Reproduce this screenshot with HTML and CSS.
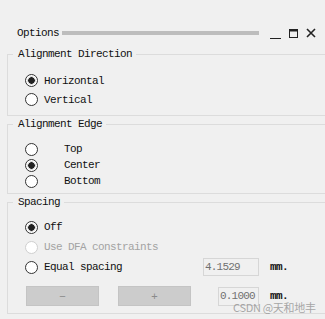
FILE: index.html
```html
<!DOCTYPE html>
<html lang="en">
<head>
  <meta charset="UTF-8">
  <meta name="viewport" content="width=device-width, initial-scale=1">
  <title>Options</title>
  <link rel="stylesheet" href="styles.css">
</head>
<body>

  <div class="panel">
    <div class="titlebar">
      <span class="title">Options</span>
      <span class="grip"></span>
      <span class="controls">
        <svg width="11" height="12" viewBox="0 0 11 12"><rect x="0" y="11" width="11" height="1.5" fill="#222"/></svg>
        <svg width="9" height="9" viewBox="0 0 9 9"><rect x="0.5" y="0.5" width="8" height="8" fill="none" stroke="#222"/><rect x="0" y="0" width="9" height="2.5" fill="#222"/></svg>
        <svg width="10" height="10" viewBox="0 0 10 10"><path d="M1 1 L9 9 M9 1 L1 9" stroke="#222" stroke-width="1.6"/></svg>
      </span>
    </div>

    <fieldset class="group group-direction">
      <legend>Alignment Direction</legend>
      <label class="row"><input type="radio" name="dir" checked><span>Horizontal</span></label>
      <label class="row"><input type="radio" name="dir"><span>Vertical</span></label>
    </fieldset>

    <fieldset class="group group-edge">
      <legend>Alignment Edge</legend>
      <label class="row"><input type="radio" name="edge"><span>Top</span></label>
      <label class="row"><input type="radio" name="edge" checked><span>Center</span></label>
      <label class="row"><input type="radio" name="edge"><span>Bottom</span></label>
    </fieldset>

    <fieldset class="group group-spacing">
      <legend>Spacing</legend>
      <label class="row"><input type="radio" name="sp" checked><span>Off</span></label>
      <label class="row disabled"><input type="radio" name="sp" disabled><span>Use DFA constraints</span></label>
      <div class="row spin-row">
        <label class="spin-label"><input type="radio" name="sp"><span>Equal spacing</span></label>
        <input class="field field-wide" type="text" value="4.1529" disabled>
        <span class="unit">mm.</span>
      </div>
      <div class="button-row">
        <button class="step" disabled>&minus;</button>
        <button class="step" disabled>+</button>
        <input class="field field-small" type="text" value="0.1000" disabled>
        <span class="unit">mm.</span>
      </div>
    </fieldset>

    <div class="watermark">CSDN @天和地丰</div>
  </div>

</body>
</html>
```

FILE: styles.css
```css
body {
  margin: 0;
  background-color: #f0f0f0;
  font-family: "Liberation Mono", "DejaVu Sans Mono", monospace;
  font-size: 11px;
  letter-spacing: -0.6px;
  color: #111;
  overflow: hidden;
}

.panel {
  position: relative;
  height: 319px;
  padding-top: 25px;
  box-sizing: border-box;
  overflow: hidden;
}

.titlebar {
  display: flex;
  align-items: center;
  height: 16px;
  padding-left: 17px;
  padding-right: 9px;
}

.grip {
  flex: 1;
  height: 4px;
  background-color: #bdbdbd;
  margin: 0 11px 0 3px;
}

.controls {
  display: flex;
  align-items: center;
  gap: 8px;
}

.controls svg {
  display: block;
}

/* group boxes run off the right edge of the dock */
.group {
  margin: 6px -30px 0 7px;
  padding: 0 0 0 5px;
  border: 1px solid #dcdcdc;
}

.group legend {
  padding: 0 4px 0 5px;
  line-height: 14px;
}

.group-direction {
  padding-top: 10px;
  padding-bottom: 6px;
}

.group-direction .row {
  height: 19px;
}

.group-edge {
  margin-top: 1px;
  padding-top: 10px;
  padding-bottom: 4px;
}

.group-edge .row {
  height: 16px;
}

.group-edge .row span {
  margin-left: 20px;
}

.group-spacing {
  margin-top: 1px;
  padding-top: 8px;
  padding-bottom: 7px;
}

.group-spacing .row {
  height: 20px;
}

.row,
.spin-label {
  display: flex;
  align-items: center;
  margin-left: 12px;
}

.spin-label {
  margin-left: 0;
  width: 178px;
}

input[type="radio"] {
  appearance: none;
  -webkit-appearance: none;
  width: 13px;
  height: 13px;
  margin: 0 6px 0 0;
  border: 1px solid #333;
  border-radius: 50%;
  background-color: #fff;
  box-sizing: border-box;
}

input[type="radio"]:checked {
  background: radial-gradient(circle, #222 0 3px, #d8d8d8 3.5px 4px, #fff 4.5px);
}

input[type="radio"]:disabled {
  border-color: #cfcfcf;
}

.disabled {
  color: #a3a3a3;
}

.field {
  height: 18px;
  padding: 0 1px;
  border: 1px solid #d6d6d6;
  background-color: #f0f0f0;
  color: #707070;
  font-family: inherit;
  font-size: 11px;
  letter-spacing: -0.8px;
  box-sizing: border-box;
}

.field-wide {
  width: 56px;
}

.field-small {
  width: 41px;
  height: 19px;
}

.unit {
  margin-left: 11px;
  font-weight: bold;
}

.button-row {
  display: flex;
  align-items: center;
  margin: 9px 0 0 13px;
  height: 20px;
}

.step {
  width: 73px;
  height: 20px;
  margin-right: 19px;
  border: 1px solid #c4c4c4;
  background-color: #cccccc;
  color: #8a8a8a;
  font-family: "Liberation Sans", Arial, sans-serif;
  font-size: 11px;
}

.step + .step {
  margin-right: 27px;
}

.watermark {
  position: absolute;
  left: 233px;
  top: 299px;
  font-family: "Noto Sans CJK SC", sans-serif;
  font-size: 11px;
  letter-spacing: -0.3px;
  color: rgba(140, 140, 140, 0.75);
}
```
